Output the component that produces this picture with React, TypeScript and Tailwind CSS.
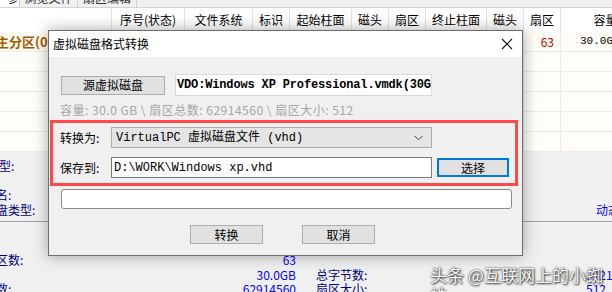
const cjk = "font-['Noto_Sans_CJK_SC','Noto_Sans',sans-serif]";
const mono = "font-['Liberation_Mono','Noto_Sans_CJK_SC',monospace]";

const cols = "grid grid-cols-[111px_73px_68px_37px_62px_37px_37px_61px_37px_37px_90px]";
const headers = ["", "序号(状态)", "文件系统", "标识", "起始柱面", "磁头", "扇区", "终止柱面", "磁头", "扇区", "容量"];

function Button({ label, className = "" }: { label: string; className?: string }) {
  return (
    <div
      className={`flex h-[19px] items-center justify-center border border-[#adadad] bg-[#e1e1e1] text-[12px] leading-none text-black ${className}`}
    >
      {label}
    </div>
  );
}

function Dialog() {
  return (
    <div className="absolute left-[48px] top-[30px] w-[475px] border border-[#6e6e6e] bg-[#f0f0f0] shadow-[0_0_14px_rgba(0,0,0,0.35)]">
      <div className="flex h-[26px] items-center justify-between bg-white pl-[4px] pr-[9px]">
        <span className="text-[12px] text-black">虚拟磁盘格式转换</span>
        <svg width="12" height="12" viewBox="0 0 12 12">
          <path d="M1 1L11 11M11 1L1 11" stroke="#111" strokeWidth="1.1" />
        </svg>
      </div>

      <div className="flex flex-col pb-[11px]">
        <div className="mt-[17px] flex items-center pl-[12px]">
          <Button label="源虚拟磁盘" className="w-[104px]" />
          <div className="ml-[10px] flex h-[22px] w-[257px] items-center overflow-hidden whitespace-nowrap border border-[#dadada] bg-white pl-[1px]">
            <span className={`${mono} text-[12px] font-bold tracking-[-0.15px] text-black`}>
              VDO:Windows XP Professional.vmdk(30GB)
            </span>
          </div>
        </div>

        <div className="mt-[6px] h-[16px] pl-[11px] text-[12px] leading-[16px] tracking-[0.5px] text-[#a6a6a6]">
          容量: 30.0 GB \ 扇区总数: 62914560 \ 扇区大小: 512
        </div>

        <div className="ml-[1px] mt-[2px] flex h-[66px] w-[468px] flex-col border-[3px] border-[#ff4848] pb-[5px] pl-[7px] pt-[4px]">
          <div className="flex items-center">
            <span className="w-[51px] text-[12px] text-black">转换为:</span>
            <div className="flex h-[21px] w-[321px] items-center justify-between border border-[#acacac] bg-[#e5e5e5] pl-[4px] pr-[8px]">
              <span className={`${mono} text-[12px] text-black`}>VirtualPC 虚拟磁盘文件 (vhd)</span>
              <svg width="9" height="6" viewBox="0 0 9 6">
                <path d="M0.5 0.8L4.5 4.8L8.5 0.8" stroke="#444" strokeWidth="1" fill="none" />
              </svg>
            </div>
          </div>
          <div className="mt-[9px] flex items-center">
            <span className="w-[51px] text-[12px] text-black">保存到:</span>
            <div className="flex h-[21px] w-[321px] items-center border border-[#7a7a7a] bg-white pl-[2px]">
              <span className={`${mono} text-[12px] text-black`}>D:\WORK\Windows xp.vhd</span>
            </div>
            <div className="ml-[5px] flex h-[19px] w-[72px] items-center justify-center border-2 border-[#0078d7] bg-[#e1e1e1] text-[12px] text-black">
              选择
            </div>
          </div>
        </div>

        <div className="ml-[12px] mt-[3px] h-[20px] w-[451px] rounded-[3px] border border-[#8a8a8a] bg-white" />

        <div className="mt-[16px] flex pl-[141px]">
          <Button label="转换" className="w-[73px]" />
          <Button label="取消" className="ml-[39px] w-[73px]" />
        </div>
      </div>
    </div>
  );
}

export default function App() {
  return (
    <div className={`relative h-[292px] w-[612px] overflow-hidden bg-[#f0f0f0] ${cjk}`}>
      {/* tabs strip */}
      <div className="h-[8px] overflow-hidden border-b border-[#d4d4d4] bg-[#f0f0f0]">
        <div className="-mt-[11px] flex text-[12px] leading-[18px]">
          <div className="w-[20px] overflow-hidden border-r border-[#cfcfcf] bg-white text-right">
            <span className="-mr-[1px]">参数</span>
          </div>
          <div className="w-[58px] border-r border-[#cfcfcf] text-center text-[#333]">浏览文件</div>
          <div className="w-[59px] border-r border-[#cfcfcf] text-center text-[#333]">扇区编辑</div>
        </div>
      </div>

      {/* partition table */}
      <div className="bg-white">
        <div className={`${cols} h-[24px] bg-white`}>
          {headers.map((h, i) => (
            <div
              key={i}
              className={`flex items-center justify-center text-[12px] text-black ${i > 0 ? "border-l border-[#e3e3e3]" : ""}`}
            >
              {h}
            </div>
          ))}
        </div>
        <div className={`${cols} h-[20px] border-b border-[#ececec] bg-[#fffdf5]`}>
          <div className="flex items-center overflow-hidden whitespace-nowrap">
            <span className="-ml-[4px] text-[13px] font-bold text-[#a85a00]">主分区(0)</span>
          </div>
          {Array.from({ length: 8 }).map((_, i) => (
            <div key={i} className="border-l border-[#f0ece0]" />
          ))}
          <div className="flex items-center justify-end border-l border-[#f0ece0] pr-[6px] text-[12px] text-[#c00000]">63</div>
          <div className="flex items-center border-l border-[#f0ece0] pl-[19px] text-black">
            <span className={`${mono} text-[11px]`}>30.0GB</span>
          </div>
        </div>
        {Array.from({ length: 5 }).map((_, r) => (
          <div key={r} className={`${cols} h-[20px] border-b border-[#ececec] bg-[#fffdf7]`}>
            {Array.from({ length: 11 }).map((_, i) => (
              <div key={i} className={i > 0 ? "border-l border-[#f0ece0]" : ""} />
            ))}
          </div>
        ))}
      </div>

      {/* details area */}
      <div className="h-[70px] border-b border-[#a0a0a0] pt-[7px] text-[12px] leading-[14.5px] text-[#000080]">
        <div className="h-[14.5px] whitespace-nowrap">
          <span className="-ml-[1px]">型:</span>
        </div>
        <div className="h-[14.5px]" />
        <div className="h-[14.5px] whitespace-nowrap">
          <span className="-ml-[4px]">名:</span>
        </div>
        <div className="flex h-[14.5px] justify-between whitespace-nowrap">
          <span className="-ml-[4px]">盘类型:</span>
          <span className="-mr-[8px] text-[#0000ff]">动态</span>
        </div>
      </div>

      <div className="pt-[2px] text-[12px] leading-[14.5px] text-[#000080]">
        {[
          ["", "", "", ""],
          ["", "", "", ""],
          ["区数:", "63", "", ""],
          [":", "30.0GB", "总字节数:", "32212254720"],
          ["数:", "62914560", "扇区大小:", "512"],
        ].map((row, i) => (
          <div key={i} className="grid h-[14.5px] grid-cols-[296px_20px_270px_auto] whitespace-nowrap">
            <div className="flex justify-between overflow-hidden">
              <span className="-ml-[4px]">{row[0] || ":"}</span>
              <span className="text-[#0000ff]">{row[1]}</span>
            </div>
            <div />
            <span>{row[2]}</span>
            <span className="text-[#0000ff]">{row[3]}</span>
          </div>
        ))}
      </div>

      <Dialog />

      <div className="absolute left-[430px] top-[265px] text-[17px] leading-[20px] text-[#f4f4f4] [text-shadow:0_0_2px_#222,1px_1px_2px_#444]">
        头条 @互联网上的小蜘蛛
      </div>
    </div>
  );
}
